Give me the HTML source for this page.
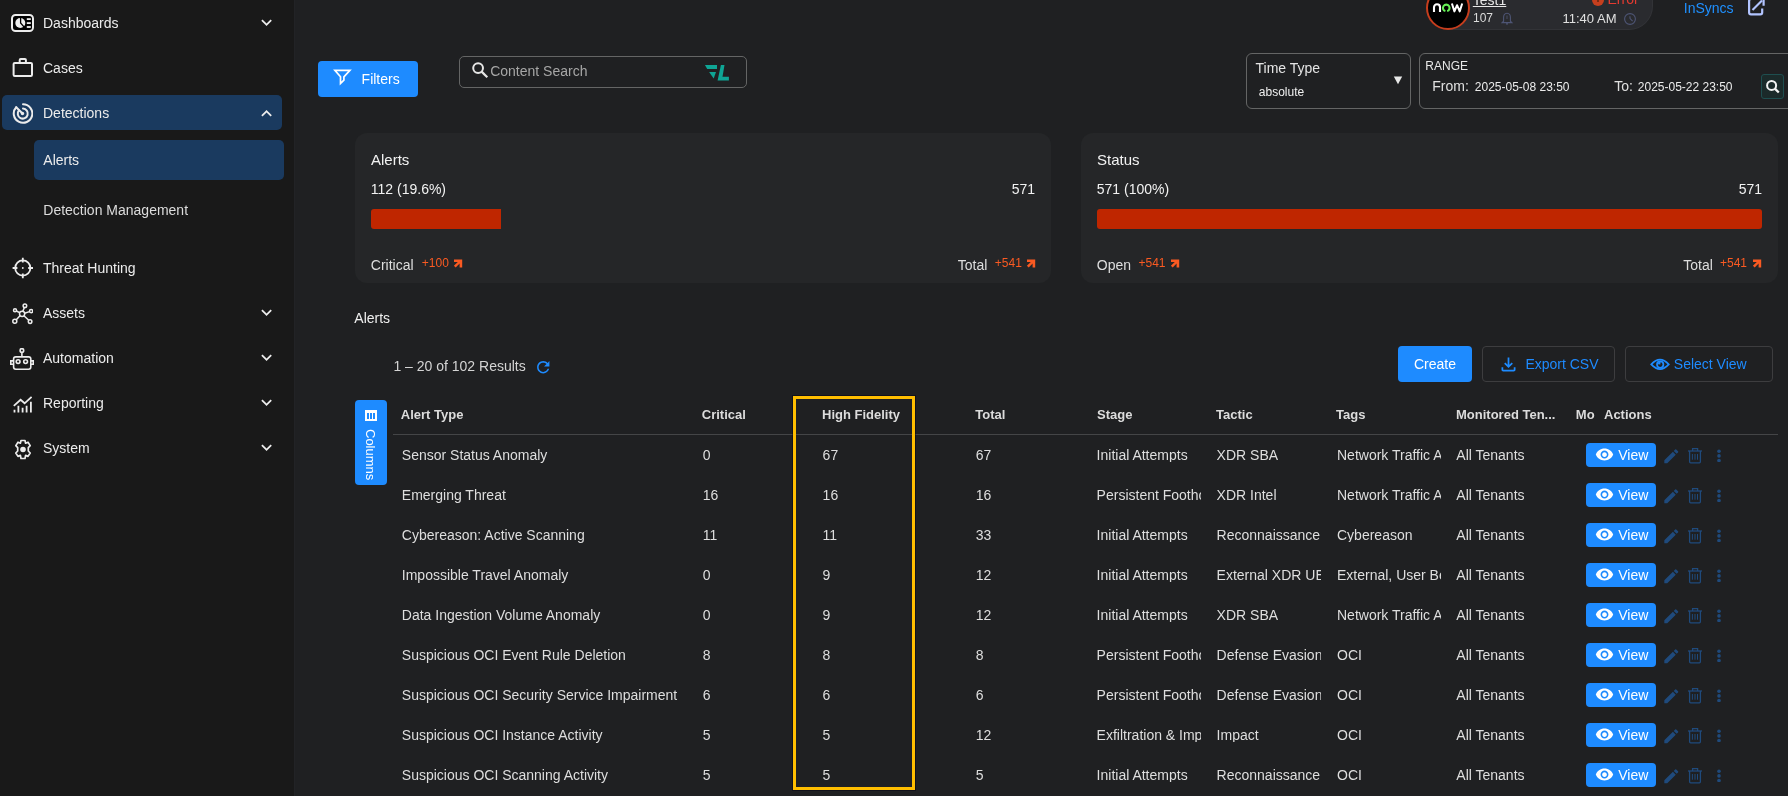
<!DOCTYPE html>
<html><head><meta charset="utf-8"><style>
html,body{margin:0;padding:0;width:1788px;height:796px;overflow:hidden;background:#1f2022;font-family:"Liberation Sans", sans-serif}
.t{position:absolute;white-space:nowrap;font-family:"Liberation Sans", sans-serif}
.r{position:absolute;display:block}
</style></head><body>
<div id="root" style="position:absolute;left:0;top:0;width:1788px;height:796px;overflow:hidden;will-change:transform">
<div class="r" style="left:0px;top:0px;width:294px;height:796px;background:#191919"></div>
<div class="r" style="left:294px;top:0px;width:1px;height:796px;background:#222326"></div>
<div class="r" style="left:2px;top:95px;width:280px;height:35px;background:#1a3a5f;border-radius:5px"></div>
<div class="r" style="left:34px;top:140px;width:250px;height:40px;background:#1a3a5f;border-radius:5px"></div>
<svg class="r" style="left:11px;top:14px;" width="23" height="18" viewBox="0 0 23 18"><rect x="1" y="1" width="21" height="16" rx="3.5" fill="#000" stroke="#ececec" stroke-width="2"/><circle cx="9.3" cy="9" r="5" fill="#ececec"/><path d="M9.6 3.6 V9 L13.6 13.6" fill="none" stroke="#000" stroke-width="1.3"/><rect x="15.8" y="4.2" width="4" height="1.8" fill="#ececec"/><rect x="15.8" y="8.2" width="4" height="1.8" fill="#ececec"/><rect x="15.8" y="12.1" width="4" height="1.8" fill="#ececec"/></svg>
<svg class="r" style="left:12px;top:57px;" width="22" height="21" viewBox="0 0 22 21"><rect x="1.6" y="5.9" width="18.4" height="13.1" rx="1.2" fill="none" stroke="#ececec" stroke-width="2"/><path d="M7.7 5.9 V3 Q7.7 2 8.7 2 H12.9 Q13.9 2 13.9 3 V5.9" fill="none" stroke="#ececec" stroke-width="2"/></svg>
<svg class="r" style="left:12px;top:102.7px;" width="21" height="21" viewBox="0 0 21 21"><path d="M11 1.2 A9.3 9.3 0 1 1 4.2 4.2" fill="none" stroke="#ececec" stroke-width="2" stroke-linecap="round"/><path d="M11 5.6 A5 5 0 1 1 6.9 7.4" fill="none" stroke="#ececec" stroke-width="2" stroke-linecap="round"/><path d="M4.2 4.2 L10.5 10.5" stroke="#ececec" stroke-width="2" stroke-linecap="round"/><circle cx="10.5" cy="10.5" r="1.7" fill="#ececec"/></svg>
<svg class="r" style="left:12px;top:257px;" width="22" height="22" viewBox="0 0 22 22"><circle cx="10.8" cy="11" r="7.6" fill="none" stroke="#ececec" stroke-width="1.8"/><path d="M10.8 0.8 V5.6 M10.8 16.4 V21.2 M0.6 11 H5.4 M16.2 11 H21" stroke="#ececec" stroke-width="1.8"/><circle cx="10.8" cy="11" r="0.9" fill="#ececec"/></svg>
<svg class="r" style="left:11px;top:303px;" width="22" height="22" viewBox="0 0 22 22"><g fill="none" stroke="#ececec" stroke-width="1.5"><circle cx="11.1" cy="10.8" r="2.6"/><circle cx="13.9" cy="2.8" r="1.8"/><circle cx="4" cy="7.3" r="1.5"/><circle cx="20.1" cy="8.1" r="1.6"/><circle cx="3.8" cy="18.2" r="2"/><circle cx="19.1" cy="18.6" r="1.8"/><path d="M11.8 8.3 L13.4 4.5 M8.6 9.7 L5.4 8 M13.6 10.2 L18.5 8.6 M9.2 12.6 L5.3 16.8 M12.9 12.7 L17.8 17.3"/></g></svg>
<svg class="r" style="left:10px;top:348px;" width="24" height="23" viewBox="0 0 24 23"><g fill="none" stroke="#ececec" stroke-width="1.6"><circle cx="11.9" cy="2.4" r="1.8"/><path d="M11.9 4.2 V8.9"/><rect x="3.6" y="8.9" width="17.2" height="12.3" rx="2.2"/><path d="M3.6 12.9 H0.8 V16.3 H3.6 M20.8 12.9 H23.3 V16.3 H20.8"/><circle cx="8.1" cy="13.6" r="1.9"/><circle cx="15.6" cy="13.6" r="1.9"/></g></svg>
<svg class="r" style="left:12px;top:395px;" width="20" height="18" viewBox="0 0 20 18"><g fill="none" stroke="#ececec" stroke-width="1.8"><path d="M1.8 10.8 L8.6 4.8 L12.6 8.3 L19.6 1.8"/><path d="M2.5 14.8 V17.5 M6.4 10.8 V17.5 M10.6 12.8 V17.5 M14.6 10.8 V17.5 M18.9 6.8 V17.5"/></g></svg>
<svg class="r" style="left:13px;top:438.5px;" width="20" height="21" viewBox="0 0 20 21"><path d="M8 1.5 H12 L12.6 4.2 L15 3.2 L17.2 6.6 L15.3 8.6 V12 L17.2 14 L15 17.4 L12.6 16.4 L12 19.5 H8 L7.4 16.4 L5 17.4 L2.8 14 L4.7 12 V8.6 L2.8 6.6 L5 3.2 L7.4 4.2 Z" fill="none" stroke="#ececec" stroke-width="1.7" stroke-linejoin="round"/><circle cx="10" cy="10.5" r="2.8" fill="#ececec"/></svg>
<svg class="r" style="left:256.02px;top:12.24px" width="21.12" height="21.12" viewBox="0 0 24 24"><path d="M16.59 8.59L12 13.17 7.41 8.59 6 10l6 6 6-6z" fill="#ececec"/></svg>
<svg class="r" style="left:256.02px;top:302.24px" width="21.12" height="21.12" viewBox="0 0 24 24"><path d="M16.59 8.59L12 13.17 7.41 8.59 6 10l6 6 6-6z" fill="#ececec"/></svg>
<svg class="r" style="left:256.02px;top:347.24px" width="21.12" height="21.12" viewBox="0 0 24 24"><path d="M16.59 8.59L12 13.17 7.41 8.59 6 10l6 6 6-6z" fill="#ececec"/></svg>
<svg class="r" style="left:256.02px;top:392.24px" width="21.12" height="21.12" viewBox="0 0 24 24"><path d="M16.59 8.59L12 13.17 7.41 8.59 6 10l6 6 6-6z" fill="#ececec"/></svg>
<svg class="r" style="left:256.02px;top:437.24px" width="21.12" height="21.12" viewBox="0 0 24 24"><path d="M16.59 8.59L12 13.17 7.41 8.59 6 10l6 6 6-6z" fill="#ececec"/></svg>
<svg class="r" style="left:256.02px;top:103.26px" width="21.12" height="21.12" viewBox="0 0 24 24"><path d="M12 8l-6 6 1.41 1.41L12 10.83l4.59 4.58L18 14z" fill="#ececec"/></svg>
<div class="t" style="left:43px;top:16.15px;font-size:14px;line-height:14px;color:#ececec;font-weight:normal;">Dashboards</div>
<div class="t" style="left:43px;top:61.15px;font-size:14px;line-height:14px;color:#ececec;font-weight:normal;">Cases</div>
<div class="t" style="left:43px;top:106.15px;font-size:14px;line-height:14px;color:#ececec;font-weight:normal;">Detections</div>
<div class="t" style="left:43px;top:261.15px;font-size:14px;line-height:14px;color:#ececec;font-weight:normal;">Threat Hunting</div>
<div class="t" style="left:43px;top:306.15px;font-size:14px;line-height:14px;color:#ececec;font-weight:normal;">Assets</div>
<div class="t" style="left:43px;top:351.15px;font-size:14px;line-height:14px;color:#ececec;font-weight:normal;">Automation</div>
<div class="t" style="left:43px;top:396.15px;font-size:14px;line-height:14px;color:#ececec;font-weight:normal;">Reporting</div>
<div class="t" style="left:43px;top:441.15px;font-size:14px;line-height:14px;color:#ececec;font-weight:normal;">System</div>
<div class="t" style="left:43.3px;top:153.15px;font-size:14px;line-height:14px;color:#ececec;font-weight:normal;">Alerts</div>
<div class="t" style="left:43.3px;top:203.15px;font-size:14px;line-height:14px;color:#dcdcdc;font-weight:normal;">Detection Management</div>
<div class="r" style="left:295px;top:0px;width:1493px;height:796px;background:#1f2022"></div>
<div class="r" style="left:1448px;top:-30px;width:205px;height:60px;background:#2a2b2f;border:1px solid #323337;border-left:0;box-sizing:border-box;border-radius:0 0 24px 0"></div>
<div class="r" style="left:1426px;top:-14.5px;width:44px;height:44px;border:2px solid #c63d1d;border-radius:50%;background:#000;box-sizing:border-box"></div>
<svg class="r" style="left:1428px;top:0px;" width="40" height="16" viewBox="0 0 40 16"><path d="M6 12.1 V7.3 A3 3 0 0 1 12 7.3 V12.1" fill="none" stroke="#fff" stroke-width="2.1"/><path d="M17.4 11.1 A3.3 3.3 0 1 1 19.1 11.1" fill="none" stroke="#66ee55" stroke-width="2.1"/><path d="M23.9 3.5 L26.4 11.4 L29.05 5.2 L31.7 11.4 L34.2 3.5" fill="none" stroke="#fff" stroke-width="2" stroke-linejoin="round"/></svg>
<div class="t" style="left:1472.8px;top:-6.85px;font-size:14px;line-height:14px;color:#e8e8e8;font-weight:normal;"><span style="text-decoration:underline">Test1</span></div>
<div class="t" style="left:1473px;top:11.84px;font-size:12px;line-height:12px;color:#dcdcdc;font-weight:normal;">107</div>
<svg class="r" style="left:1501px;top:11.5px;" width="12" height="13" viewBox="0 0 12 13"><path d="M6 1.2 C3.4 1.2 2.6 3.2 2.6 5.4 V9.2 L1.2 10.6 H10.8 L9.4 9.2 V5.4 C9.4 3.2 8.6 1.2 6 1.2 Z" fill="none" stroke="#4e5575" stroke-width="1.1"/><path d="M5 11.8 H7" stroke="#4e5575" stroke-width="1.2"/><path d="M6 3.5 V7" stroke="#4e5575" stroke-width="0.8"/></svg>
<div class="r" style="left:1592px;top:-6.2px;width:12px;height:12px;border-radius:50%;background:#c63f1e"></div>
<div class="r" style="left:1597.3px;top:-4px;width:1.400000000000091px;height:6px;background:#7a2a14"></div>
<div class="t" style="left:1607.5px;top:-7.85px;font-size:14px;line-height:14px;color:#e53a30;font-weight:normal;">Error</div>
<div class="t" style="left:1562.5px;top:12.00px;font-size:13px;line-height:13px;color:#e0e0e0;font-weight:normal;">11:40 AM</div>
<svg class="r" style="left:1624px;top:13px;" width="12" height="12" viewBox="0 0 12 12"><circle cx="6" cy="6" r="5.4" fill="none" stroke="#4e5575" stroke-width="1.1"/><path d="M5.9 3.2 L6.1 5.6 L8.6 8.2" fill="none" stroke="#4e5575" stroke-width="1.1"/></svg>
<div class="t" style="left:1683.8px;top:1.15px;font-size:14px;line-height:14px;color:#1f90ff;font-weight:normal;">InSyncs</div>
<svg class="r" style="left:1746px;top:-3px;" width="20" height="20" viewBox="0 0 20 20"><path d="M8 2 H5 Q3.1 2 3.1 3.9 V15.4 Q3.1 17.3 5 17.3 H14.3 Q16.2 17.3 16.2 15.4 V11.5" fill="none" stroke="#b2c4ff" stroke-width="2.2"/><path d="M6.5 13 L16 3.5" fill="none" stroke="#b2c4ff" stroke-width="2.1"/><path d="M10.5 1.8 H17.6 V8.8" fill="none" stroke="#b2c4ff" stroke-width="2.2"/></svg>
<div class="r" style="left:318px;top:61px;width:100px;height:36px;background:#1e8bff;border-radius:4px"></div>
<svg class="r" style="left:333px;top:69px;" width="19" height="17" viewBox="0 0 19 17"><path d="M1.9 1.4 H16.9 L10.9 7.8 V11.2 L7.5 14.5 V7.8 Z" fill="none" stroke="#fff" stroke-width="1.7" stroke-linejoin="miter"/></svg>
<div class="t" style="left:361.6px;top:72.15px;font-size:14px;line-height:14px;color:#fff;font-weight:normal;">Filters</div>
<div class="r" style="left:459px;top:56px;width:288px;height:32px;border:1px solid #646565;border-radius:5px;box-sizing:border-box"></div>
<svg class="r" style="left:471px;top:61px;" width="18" height="18" viewBox="0 0 18 18"><circle cx="7.1" cy="7.1" r="4.9" fill="none" stroke="#e6e6e6" stroke-width="2"/><path d="M10.6 10.6 L16.3 16.3" stroke="#e6e6e6" stroke-width="2.2"/></svg>
<div class="t" style="left:490.2px;top:64.35px;font-size:14px;line-height:14px;color:#a6a6a6;font-weight:normal;">Content Search</div>
<svg class="r" style="left:704px;top:64px;" width="26" height="18" viewBox="0 0 26 18"><path d="M0.9 0.9 H13 V5 H3.2 Z" fill="#0fa595"/><path d="M5.1 8.1 H12 L9.7 14.6 Z" fill="#0fa595"/><path d="M16.9 1 H20.5 L18.5 12.7 H24.9 V16.6 H13.6 Z" fill="#0fa595"/></svg>
<div class="r" style="left:1246px;top:53px;width:165px;height:56px;border:1px solid #646565;border-radius:6px;box-sizing:border-box"></div>
<div class="t" style="left:1255.5px;top:61.35px;font-size:14px;line-height:14px;color:#e4e4e4;font-weight:normal;">Time Type</div>
<div class="t" style="left:1258.8px;top:85.84px;font-size:12px;line-height:12px;color:#f0f0f0;font-weight:normal;">absolute</div>
<svg class="r" style="left:1393px;top:76px;" width="10" height="9" viewBox="0 0 10 9"><path d="M0.8 0.5 H9.2 L5 8.2 Z" fill="#e8e8e8"/></svg>
<div class="r" style="left:1419px;top:53px;width:381px;height:56px;border:1px solid #646565;border-radius:6px;box-sizing:border-box"></div>
<div class="t" style="left:1425.3px;top:59.54px;font-size:12px;line-height:12px;color:#e8e8e8;font-weight:normal;">RANGE</div>
<div class="t" style="left:1432.3px;top:79.35px;font-size:14px;line-height:14px;color:#e0e0e0;font-weight:normal;">From:</div>
<div class="t" style="left:1474.8px;top:81.04px;font-size:12px;line-height:12px;color:#ececec;font-weight:normal;">2025-05-08 23:50</div>
<div class="t" style="left:1614.2px;top:79.35px;font-size:14px;line-height:14px;color:#e0e0e0;font-weight:normal;">To:</div>
<div class="t" style="left:1637.8px;top:81.04px;font-size:12px;line-height:12px;color:#ececec;font-weight:normal;">2025-05-22 23:50</div>
<div class="r" style="left:1761px;top:74px;width:23px;height:25px;background:#1b2a2a;border:1px solid #1e4e4f;border-radius:3px;box-sizing:border-box"></div>
<svg class="r" style="left:1761px;top:74px;" width="23" height="25" viewBox="0 0 23 25"><circle cx="10.6" cy="11.4" r="4.5" fill="none" stroke="#f2f2f2" stroke-width="2"/><path d="M13.8 14.6 L17.8 18.5" stroke="#f2f2f2" stroke-width="2.3"/></svg>
<div class="r" style="left:355px;top:133px;width:696px;height:150px;background:#252628;border-radius:12px"></div>
<div class="t" style="left:371px;top:152.30px;font-size:15px;line-height:15px;color:#f2f2f2;font-weight:normal;">Alerts</div>
<div class="t" style="left:370.8px;top:182.15px;font-size:14px;line-height:14px;color:#f2f2f2;font-weight:normal;">112 (19.6%)</div>
<div class="t" style="left:835px;width:200px;text-align:right;top:182.15px;font-size:14px;line-height:14px;color:#f2f2f2">571</div>
<div class="r" style="left:371px;top:209px;width:130px;height:20px;background:#bf2600;border-radius:3px;border-top-right-radius:0;border-bottom-right-radius:0"></div>
<div class="t" style="left:370.8px;top:258.15px;font-size:14px;line-height:14px;color:#dedede;font-weight:normal;">Critical</div>
<div class="t" style="left:421.8px;top:257.34px;font-size:12px;line-height:12px;color:#fa5a22;font-weight:normal;">+100</div>
<svg class="r" style="left:453.2px;top:258.5px;" width="10" height="10" viewBox="0 0 10 10"><path d="M1 0.5 H9.2 V8.4 H6.6 V4.6 L2.7 8.5 L0.9 6.7 L4.8 2.9 H1 Z" fill="#fa5a22"/></svg>
<div class="t" style="left:957.8px;top:258.15px;font-size:14px;line-height:14px;color:#dedede;font-weight:normal;">Total</div>
<div class="t" style="left:994.8px;top:257.34px;font-size:12px;line-height:12px;color:#fa5a22;font-weight:normal;">+541</div>
<svg class="r" style="left:1026px;top:258.5px;" width="10" height="10" viewBox="0 0 10 10"><path d="M1 0.5 H9.2 V8.4 H6.6 V4.6 L2.7 8.5 L0.9 6.7 L4.8 2.9 H1 Z" fill="#fa5a22"/></svg>
<div class="r" style="left:1081px;top:133px;width:697px;height:150px;background:#252628;border-radius:12px"></div>
<div class="t" style="left:1097px;top:152.30px;font-size:15px;line-height:15px;color:#f2f2f2;font-weight:normal;">Status</div>
<div class="t" style="left:1096.8px;top:182.15px;font-size:14px;line-height:14px;color:#f2f2f2;font-weight:normal;">571 (100%)</div>
<div class="t" style="left:1562px;width:200px;text-align:right;top:182.15px;font-size:14px;line-height:14px;color:#f2f2f2">571</div>
<div class="r" style="left:1097px;top:209px;width:665px;height:20px;background:#bf2600;border-radius:3px"></div>
<div class="t" style="left:1096.8px;top:258.15px;font-size:14px;line-height:14px;color:#dedede;font-weight:normal;">Open</div>
<div class="t" style="left:1138.5px;top:257.34px;font-size:12px;line-height:12px;color:#fa5a22;font-weight:normal;">+541</div>
<svg class="r" style="left:1170px;top:258.5px;" width="10" height="10" viewBox="0 0 10 10"><path d="M1 0.5 H9.2 V8.4 H6.6 V4.6 L2.7 8.5 L0.9 6.7 L4.8 2.9 H1 Z" fill="#fa5a22"/></svg>
<div class="t" style="left:1683.3px;top:258.15px;font-size:14px;line-height:14px;color:#dedede;font-weight:normal;">Total</div>
<div class="t" style="left:1720px;top:257.34px;font-size:12px;line-height:12px;color:#fa5a22;font-weight:normal;">+541</div>
<svg class="r" style="left:1751.5px;top:258.5px;" width="10" height="10" viewBox="0 0 10 10"><path d="M1 0.5 H9.2 V8.4 H6.6 V4.6 L2.7 8.5 L0.9 6.7 L4.8 2.9 H1 Z" fill="#fa5a22"/></svg>
<div class="t" style="left:354.3px;top:311.15px;font-size:14px;line-height:14px;color:#f0f0f0;font-weight:normal;">Alerts</div>
<div class="t" style="left:393.4px;top:359.15px;font-size:14px;line-height:14px;color:#d4d4d4;font-weight:normal;">1 – 20 of 102 Results</div>
<svg class="r" style="left:534px;top:358px;" width="18.5" height="18.5" viewBox="0 0 24 24"><path d="M17.65 6.35C16.2 4.9 14.21 4 12 4c-4.42 0-7.99 3.58-7.99 8s3.57 8 7.99 8c3.73 0 6.84-2.55 7.73-6h-2.08c-.82 2.33-3.04 4-5.65 4-3.31 0-6-2.69-6-6s2.69-6 6-6c1.66 0 3.14.69 4.22 1.78L13 11h7V4l-2.35 2.35z" fill="#1e8bff"/></svg>
<div class="r" style="left:1398px;top:346px;width:74px;height:36px;background:#1e8bff;border-radius:4px"></div>
<div class="t" style="left:1414px;top:357.15px;font-size:14px;line-height:14px;color:#fff;font-weight:normal;">Create</div>
<div class="r" style="left:1482px;top:346px;width:133px;height:36px;border:1px solid #3d3d3f;border-radius:4px;box-sizing:border-box"></div>
<svg class="r" style="left:1497.5px;top:354.2px;" width="21" height="21" viewBox="0 0 24 24"><path d="M18 15v3H6v-3H4v3c0 1.1.9 2 2 2h12c1.1 0 2-.9 2-2v-3h-2zm-1-4l-1.41-1.41L13 12.17V4h-2v8.17L8.41 9.59 7 11l5 5 5-5z" fill="#1e8bff"/></svg>
<div class="t" style="left:1525.4px;top:357.15px;font-size:14px;line-height:14px;color:#1e8bff;font-weight:normal;">Export CSV</div>
<div class="r" style="left:1625px;top:346px;width:148px;height:36px;border:1px solid #3d3d3f;border-radius:4px;box-sizing:border-box"></div>
<svg class="r" style="left:1650px;top:357px;" width="20" height="16" viewBox="0 0 20 16"><path d="M1.3 7.4 Q10 -2 18.7 7.4 Q10 16.8 1.3 7.4 Z" fill="none" stroke="#1e8bff" stroke-width="1.8"/><circle cx="10.2" cy="7.6" r="3.2" fill="none" stroke="#1e8bff" stroke-width="1.7"/><path d="M7.6 7.2 A2.8 2.8 0 0 1 10.6 4.8 L10.3 7.5 Z" fill="#1e8bff"/></svg>
<div class="t" style="left:1673.8px;top:357.15px;font-size:14px;line-height:14px;color:#1e8bff;font-weight:normal;">Select View</div>
<div class="r" style="left:355px;top:400px;width:32px;height:85px;background:#1e8bff;border-radius:4px"></div>
<div class="r" style="left:365px;top:410px;width:12px;height:11px;background:#fff"></div>
<div class="r" style="left:367px;top:413px;width:1.6000000000000227px;height:6px;background:#1e8bff"></div>
<div class="r" style="left:370.1px;top:413px;width:1.7999999999999545px;height:6px;background:#1e8bff"></div>
<div class="r" style="left:373.4px;top:413px;width:1.6000000000000227px;height:6px;background:#1e8bff"></div>
<div class="t" style="left:377px;top:429px;font-size:13px;line-height:13px;color:#fff;transform-origin:0 0;transform:rotate(90deg)">Columns</div>
<div class="t" style="left:400.8px;top:408.00px;font-size:13px;line-height:13px;color:#dcdcdc;font-weight:bold;">Alert Type</div>
<div class="t" style="left:701.8px;top:408.00px;font-size:13px;line-height:13px;color:#dcdcdc;font-weight:bold;">Critical</div>
<div class="t" style="left:822px;top:408.00px;font-size:13px;line-height:13px;color:#dcdcdc;font-weight:bold;">High Fidelity</div>
<div class="t" style="left:975.3px;top:408.00px;font-size:13px;line-height:13px;color:#dcdcdc;font-weight:bold;">Total</div>
<div class="t" style="left:1097px;top:408.00px;font-size:13px;line-height:13px;color:#dcdcdc;font-weight:bold;">Stage</div>
<div class="t" style="left:1216px;top:408.00px;font-size:13px;line-height:13px;color:#dcdcdc;font-weight:bold;">Tactic</div>
<div class="t" style="left:1336px;top:408.00px;font-size:13px;line-height:13px;color:#dcdcdc;font-weight:bold;">Tags</div>
<div class="t" style="left:1456px;top:408.00px;font-size:13px;line-height:13px;color:#dcdcdc;font-weight:bold;">Monitored Ten...</div>
<div class="t" style="left:1575.8px;top:408.00px;font-size:13px;line-height:13px;color:#dcdcdc;font-weight:bold;">Mo</div>
<div class="t" style="left:1604px;top:408.00px;font-size:13px;line-height:13px;color:#dcdcdc;font-weight:bold;">Actions</div>
<div class="r" style="left:393px;top:434px;width:1385px;height:1px;background:#444547"></div>
<div class="t" style="left:401.8px;top:447.95px;font-size:14px;line-height:14px;color:#dedede;font-weight:normal;">Sensor Status Anomaly</div>
<div class="t" style="left:702.8px;top:447.95px;font-size:14px;line-height:14px;color:#dedede;font-weight:normal;">0</div>
<div class="t" style="left:822.6px;top:447.95px;font-size:14px;line-height:14px;color:#dedede;font-weight:normal;">67</div>
<div class="t" style="left:975.8px;top:447.95px;font-size:14px;line-height:14px;color:#dedede;font-weight:normal;">67</div>
<div class="t" style="left:1096.6px;top:447.95px;font-size:14px;line-height:14px;color:#dedede;font-weight:normal;width:104.3px;overflow:hidden;white-space:nowrap">Initial Attempts</div>
<div class="t" style="left:1216.6px;top:447.95px;font-size:14px;line-height:14px;color:#dedede;font-weight:normal;width:104.3px;overflow:hidden;white-space:nowrap">XDR SBA</div>
<div class="t" style="left:1337px;top:447.95px;font-size:14px;line-height:14px;color:#dedede;font-weight:normal;width:104.3px;overflow:hidden;white-space:nowrap">Network Traffic Analysis</div>
<div class="t" style="left:1456.3px;top:447.95px;font-size:14px;line-height:14px;color:#dedede;font-weight:normal;">All Tenants</div>
<div class="r" style="left:1586px;top:443px;width:70px;height:24px;background:#1e8bff;border-radius:4px"></div>
<svg class="r" style="left:1594.5px;top:445.4px;" width="19" height="19" viewBox="0 0 24 24"><path d="M12 4.5C7 4.5 2.73 7.61 1 12c1.73 4.39 6 7.5 11 7.5s9.27-3.11 11-7.5c-1.73-4.39-6-7.5-11-7.5zM12 17c-2.76 0-5-2.24-5-5s2.24-5 5-5 5 2.24 5 5-2.24 5-5 5zm0-8c-1.66 0-3 1.34-3 3s1.34 3 3 3 3-1.34 3-3-1.34-3-3-3z" fill="#fff"/></svg>
<div class="t" style="left:1618.2px;top:447.95px;font-size:14px;line-height:14px;color:#fff;font-weight:normal;">View</div>
<svg class="r" style="left:1661.6px;top:446.7px;" width="18.6" height="18.6" viewBox="0 0 24 24"><path d="M3 17.25V21h3.75L17.81 9.94l-3.75-3.75L3 17.25zM20.71 7.04c.39-.39.39-1.02 0-1.41l-2.34-2.34a.9959.9959 0 0 0-1.41 0l-1.83 1.83 3.75 3.75 1.83-1.83z" fill="#1f4a7c"/></svg>
<svg class="r" style="left:1687px;top:447px;" width="16" height="17" viewBox="0 0 16 17"><g fill="none" stroke="#1f4a7c" stroke-width="1.3"><path d="M1 4 H15"/><path d="M5.6 4 V1.6 H10.6 V4"/><path d="M2.6 4 V14.8 Q2.6 15.8 3.6 15.8 H12.4 Q13.4 15.8 13.4 14.8 V4"/></g><path d="M5.4 7 V12.7 M8 7 V12.7 M10.5 7 V12.7" stroke="#1f4a7c" stroke-width="1"/></svg>
<svg class="r" style="left:1716px;top:449px;" width="6" height="13" viewBox="0 0 6 13"><circle cx="3" cy="2.2" r="1.8" fill="#1f4a7c"/><circle cx="3" cy="6.9" r="1.8" fill="#1f4a7c"/><circle cx="3" cy="11.5" r="1.8" fill="#1f4a7c"/></svg>
<div class="t" style="left:401.8px;top:487.95px;font-size:14px;line-height:14px;color:#dedede;font-weight:normal;">Emerging Threat</div>
<div class="t" style="left:702.8px;top:487.95px;font-size:14px;line-height:14px;color:#dedede;font-weight:normal;">16</div>
<div class="t" style="left:822.6px;top:487.95px;font-size:14px;line-height:14px;color:#dedede;font-weight:normal;">16</div>
<div class="t" style="left:975.8px;top:487.95px;font-size:14px;line-height:14px;color:#dedede;font-weight:normal;">16</div>
<div class="t" style="left:1096.6px;top:487.95px;font-size:14px;line-height:14px;color:#dedede;font-weight:normal;width:104.3px;overflow:hidden;white-space:nowrap">Persistent Foothold</div>
<div class="t" style="left:1216.6px;top:487.95px;font-size:14px;line-height:14px;color:#dedede;font-weight:normal;width:104.3px;overflow:hidden;white-space:nowrap">XDR Intel</div>
<div class="t" style="left:1337px;top:487.95px;font-size:14px;line-height:14px;color:#dedede;font-weight:normal;width:104.3px;overflow:hidden;white-space:nowrap">Network Traffic Analysis</div>
<div class="t" style="left:1456.3px;top:487.95px;font-size:14px;line-height:14px;color:#dedede;font-weight:normal;">All Tenants</div>
<div class="r" style="left:1586px;top:483px;width:70px;height:24px;background:#1e8bff;border-radius:4px"></div>
<svg class="r" style="left:1594.5px;top:485.4px;" width="19" height="19" viewBox="0 0 24 24"><path d="M12 4.5C7 4.5 2.73 7.61 1 12c1.73 4.39 6 7.5 11 7.5s9.27-3.11 11-7.5c-1.73-4.39-6-7.5-11-7.5zM12 17c-2.76 0-5-2.24-5-5s2.24-5 5-5 5 2.24 5 5-2.24 5-5 5zm0-8c-1.66 0-3 1.34-3 3s1.34 3 3 3 3-1.34 3-3-1.34-3-3-3z" fill="#fff"/></svg>
<div class="t" style="left:1618.2px;top:487.95px;font-size:14px;line-height:14px;color:#fff;font-weight:normal;">View</div>
<svg class="r" style="left:1661.6px;top:486.7px;" width="18.6" height="18.6" viewBox="0 0 24 24"><path d="M3 17.25V21h3.75L17.81 9.94l-3.75-3.75L3 17.25zM20.71 7.04c.39-.39.39-1.02 0-1.41l-2.34-2.34a.9959.9959 0 0 0-1.41 0l-1.83 1.83 3.75 3.75 1.83-1.83z" fill="#1f4a7c"/></svg>
<svg class="r" style="left:1687px;top:487px;" width="16" height="17" viewBox="0 0 16 17"><g fill="none" stroke="#1f4a7c" stroke-width="1.3"><path d="M1 4 H15"/><path d="M5.6 4 V1.6 H10.6 V4"/><path d="M2.6 4 V14.8 Q2.6 15.8 3.6 15.8 H12.4 Q13.4 15.8 13.4 14.8 V4"/></g><path d="M5.4 7 V12.7 M8 7 V12.7 M10.5 7 V12.7" stroke="#1f4a7c" stroke-width="1"/></svg>
<svg class="r" style="left:1716px;top:489px;" width="6" height="13" viewBox="0 0 6 13"><circle cx="3" cy="2.2" r="1.8" fill="#1f4a7c"/><circle cx="3" cy="6.9" r="1.8" fill="#1f4a7c"/><circle cx="3" cy="11.5" r="1.8" fill="#1f4a7c"/></svg>
<div class="t" style="left:401.8px;top:527.95px;font-size:14px;line-height:14px;color:#dedede;font-weight:normal;">Cybereason: Active Scanning</div>
<div class="t" style="left:702.8px;top:527.95px;font-size:14px;line-height:14px;color:#dedede;font-weight:normal;">11</div>
<div class="t" style="left:822.6px;top:527.95px;font-size:14px;line-height:14px;color:#dedede;font-weight:normal;">11</div>
<div class="t" style="left:975.8px;top:527.95px;font-size:14px;line-height:14px;color:#dedede;font-weight:normal;">33</div>
<div class="t" style="left:1096.6px;top:527.95px;font-size:14px;line-height:14px;color:#dedede;font-weight:normal;width:104.3px;overflow:hidden;white-space:nowrap">Initial Attempts</div>
<div class="t" style="left:1216.6px;top:527.95px;font-size:14px;line-height:14px;color:#dedede;font-weight:normal;width:104.3px;overflow:hidden;white-space:nowrap">Reconnaissance</div>
<div class="t" style="left:1337px;top:527.95px;font-size:14px;line-height:14px;color:#dedede;font-weight:normal;width:104.3px;overflow:hidden;white-space:nowrap">Cybereason</div>
<div class="t" style="left:1456.3px;top:527.95px;font-size:14px;line-height:14px;color:#dedede;font-weight:normal;">All Tenants</div>
<div class="r" style="left:1586px;top:523px;width:70px;height:24px;background:#1e8bff;border-radius:4px"></div>
<svg class="r" style="left:1594.5px;top:525.4px;" width="19" height="19" viewBox="0 0 24 24"><path d="M12 4.5C7 4.5 2.73 7.61 1 12c1.73 4.39 6 7.5 11 7.5s9.27-3.11 11-7.5c-1.73-4.39-6-7.5-11-7.5zM12 17c-2.76 0-5-2.24-5-5s2.24-5 5-5 5 2.24 5 5-2.24 5-5 5zm0-8c-1.66 0-3 1.34-3 3s1.34 3 3 3 3-1.34 3-3-1.34-3-3-3z" fill="#fff"/></svg>
<div class="t" style="left:1618.2px;top:527.95px;font-size:14px;line-height:14px;color:#fff;font-weight:normal;">View</div>
<svg class="r" style="left:1661.6px;top:526.7px;" width="18.6" height="18.6" viewBox="0 0 24 24"><path d="M3 17.25V21h3.75L17.81 9.94l-3.75-3.75L3 17.25zM20.71 7.04c.39-.39.39-1.02 0-1.41l-2.34-2.34a.9959.9959 0 0 0-1.41 0l-1.83 1.83 3.75 3.75 1.83-1.83z" fill="#1f4a7c"/></svg>
<svg class="r" style="left:1687px;top:527px;" width="16" height="17" viewBox="0 0 16 17"><g fill="none" stroke="#1f4a7c" stroke-width="1.3"><path d="M1 4 H15"/><path d="M5.6 4 V1.6 H10.6 V4"/><path d="M2.6 4 V14.8 Q2.6 15.8 3.6 15.8 H12.4 Q13.4 15.8 13.4 14.8 V4"/></g><path d="M5.4 7 V12.7 M8 7 V12.7 M10.5 7 V12.7" stroke="#1f4a7c" stroke-width="1"/></svg>
<svg class="r" style="left:1716px;top:529px;" width="6" height="13" viewBox="0 0 6 13"><circle cx="3" cy="2.2" r="1.8" fill="#1f4a7c"/><circle cx="3" cy="6.9" r="1.8" fill="#1f4a7c"/><circle cx="3" cy="11.5" r="1.8" fill="#1f4a7c"/></svg>
<div class="t" style="left:401.8px;top:567.95px;font-size:14px;line-height:14px;color:#dedede;font-weight:normal;">Impossible Travel Anomaly</div>
<div class="t" style="left:702.8px;top:567.95px;font-size:14px;line-height:14px;color:#dedede;font-weight:normal;">0</div>
<div class="t" style="left:822.6px;top:567.95px;font-size:14px;line-height:14px;color:#dedede;font-weight:normal;">9</div>
<div class="t" style="left:975.8px;top:567.95px;font-size:14px;line-height:14px;color:#dedede;font-weight:normal;">12</div>
<div class="t" style="left:1096.6px;top:567.95px;font-size:14px;line-height:14px;color:#dedede;font-weight:normal;width:104.3px;overflow:hidden;white-space:nowrap">Initial Attempts</div>
<div class="t" style="left:1216.6px;top:567.95px;font-size:14px;line-height:14px;color:#dedede;font-weight:normal;width:104.3px;overflow:hidden;white-space:nowrap">External XDR UEBA</div>
<div class="t" style="left:1337px;top:567.95px;font-size:14px;line-height:14px;color:#dedede;font-weight:normal;width:104.3px;overflow:hidden;white-space:nowrap">External, User Behavior</div>
<div class="t" style="left:1456.3px;top:567.95px;font-size:14px;line-height:14px;color:#dedede;font-weight:normal;">All Tenants</div>
<div class="r" style="left:1586px;top:563px;width:70px;height:24px;background:#1e8bff;border-radius:4px"></div>
<svg class="r" style="left:1594.5px;top:565.4px;" width="19" height="19" viewBox="0 0 24 24"><path d="M12 4.5C7 4.5 2.73 7.61 1 12c1.73 4.39 6 7.5 11 7.5s9.27-3.11 11-7.5c-1.73-4.39-6-7.5-11-7.5zM12 17c-2.76 0-5-2.24-5-5s2.24-5 5-5 5 2.24 5 5-2.24 5-5 5zm0-8c-1.66 0-3 1.34-3 3s1.34 3 3 3 3-1.34 3-3-1.34-3-3-3z" fill="#fff"/></svg>
<div class="t" style="left:1618.2px;top:567.95px;font-size:14px;line-height:14px;color:#fff;font-weight:normal;">View</div>
<svg class="r" style="left:1661.6px;top:566.7px;" width="18.6" height="18.6" viewBox="0 0 24 24"><path d="M3 17.25V21h3.75L17.81 9.94l-3.75-3.75L3 17.25zM20.71 7.04c.39-.39.39-1.02 0-1.41l-2.34-2.34a.9959.9959 0 0 0-1.41 0l-1.83 1.83 3.75 3.75 1.83-1.83z" fill="#1f4a7c"/></svg>
<svg class="r" style="left:1687px;top:567px;" width="16" height="17" viewBox="0 0 16 17"><g fill="none" stroke="#1f4a7c" stroke-width="1.3"><path d="M1 4 H15"/><path d="M5.6 4 V1.6 H10.6 V4"/><path d="M2.6 4 V14.8 Q2.6 15.8 3.6 15.8 H12.4 Q13.4 15.8 13.4 14.8 V4"/></g><path d="M5.4 7 V12.7 M8 7 V12.7 M10.5 7 V12.7" stroke="#1f4a7c" stroke-width="1"/></svg>
<svg class="r" style="left:1716px;top:569px;" width="6" height="13" viewBox="0 0 6 13"><circle cx="3" cy="2.2" r="1.8" fill="#1f4a7c"/><circle cx="3" cy="6.9" r="1.8" fill="#1f4a7c"/><circle cx="3" cy="11.5" r="1.8" fill="#1f4a7c"/></svg>
<div class="t" style="left:401.8px;top:607.95px;font-size:14px;line-height:14px;color:#dedede;font-weight:normal;">Data Ingestion Volume Anomaly</div>
<div class="t" style="left:702.8px;top:607.95px;font-size:14px;line-height:14px;color:#dedede;font-weight:normal;">0</div>
<div class="t" style="left:822.6px;top:607.95px;font-size:14px;line-height:14px;color:#dedede;font-weight:normal;">9</div>
<div class="t" style="left:975.8px;top:607.95px;font-size:14px;line-height:14px;color:#dedede;font-weight:normal;">12</div>
<div class="t" style="left:1096.6px;top:607.95px;font-size:14px;line-height:14px;color:#dedede;font-weight:normal;width:104.3px;overflow:hidden;white-space:nowrap">Initial Attempts</div>
<div class="t" style="left:1216.6px;top:607.95px;font-size:14px;line-height:14px;color:#dedede;font-weight:normal;width:104.3px;overflow:hidden;white-space:nowrap">XDR SBA</div>
<div class="t" style="left:1337px;top:607.95px;font-size:14px;line-height:14px;color:#dedede;font-weight:normal;width:104.3px;overflow:hidden;white-space:nowrap">Network Traffic Analysis</div>
<div class="t" style="left:1456.3px;top:607.95px;font-size:14px;line-height:14px;color:#dedede;font-weight:normal;">All Tenants</div>
<div class="r" style="left:1586px;top:603px;width:70px;height:24px;background:#1e8bff;border-radius:4px"></div>
<svg class="r" style="left:1594.5px;top:605.4px;" width="19" height="19" viewBox="0 0 24 24"><path d="M12 4.5C7 4.5 2.73 7.61 1 12c1.73 4.39 6 7.5 11 7.5s9.27-3.11 11-7.5c-1.73-4.39-6-7.5-11-7.5zM12 17c-2.76 0-5-2.24-5-5s2.24-5 5-5 5 2.24 5 5-2.24 5-5 5zm0-8c-1.66 0-3 1.34-3 3s1.34 3 3 3 3-1.34 3-3-1.34-3-3-3z" fill="#fff"/></svg>
<div class="t" style="left:1618.2px;top:607.95px;font-size:14px;line-height:14px;color:#fff;font-weight:normal;">View</div>
<svg class="r" style="left:1661.6px;top:606.7px;" width="18.6" height="18.6" viewBox="0 0 24 24"><path d="M3 17.25V21h3.75L17.81 9.94l-3.75-3.75L3 17.25zM20.71 7.04c.39-.39.39-1.02 0-1.41l-2.34-2.34a.9959.9959 0 0 0-1.41 0l-1.83 1.83 3.75 3.75 1.83-1.83z" fill="#1f4a7c"/></svg>
<svg class="r" style="left:1687px;top:607px;" width="16" height="17" viewBox="0 0 16 17"><g fill="none" stroke="#1f4a7c" stroke-width="1.3"><path d="M1 4 H15"/><path d="M5.6 4 V1.6 H10.6 V4"/><path d="M2.6 4 V14.8 Q2.6 15.8 3.6 15.8 H12.4 Q13.4 15.8 13.4 14.8 V4"/></g><path d="M5.4 7 V12.7 M8 7 V12.7 M10.5 7 V12.7" stroke="#1f4a7c" stroke-width="1"/></svg>
<svg class="r" style="left:1716px;top:609px;" width="6" height="13" viewBox="0 0 6 13"><circle cx="3" cy="2.2" r="1.8" fill="#1f4a7c"/><circle cx="3" cy="6.9" r="1.8" fill="#1f4a7c"/><circle cx="3" cy="11.5" r="1.8" fill="#1f4a7c"/></svg>
<div class="t" style="left:401.8px;top:647.95px;font-size:14px;line-height:14px;color:#dedede;font-weight:normal;">Suspicious OCI Event Rule Deletion</div>
<div class="t" style="left:702.8px;top:647.95px;font-size:14px;line-height:14px;color:#dedede;font-weight:normal;">8</div>
<div class="t" style="left:822.6px;top:647.95px;font-size:14px;line-height:14px;color:#dedede;font-weight:normal;">8</div>
<div class="t" style="left:975.8px;top:647.95px;font-size:14px;line-height:14px;color:#dedede;font-weight:normal;">8</div>
<div class="t" style="left:1096.6px;top:647.95px;font-size:14px;line-height:14px;color:#dedede;font-weight:normal;width:104.3px;overflow:hidden;white-space:nowrap">Persistent Foothold</div>
<div class="t" style="left:1216.6px;top:647.95px;font-size:14px;line-height:14px;color:#dedede;font-weight:normal;width:104.3px;overflow:hidden;white-space:nowrap">Defense Evasion</div>
<div class="t" style="left:1337px;top:647.95px;font-size:14px;line-height:14px;color:#dedede;font-weight:normal;width:104.3px;overflow:hidden;white-space:nowrap">OCI</div>
<div class="t" style="left:1456.3px;top:647.95px;font-size:14px;line-height:14px;color:#dedede;font-weight:normal;">All Tenants</div>
<div class="r" style="left:1586px;top:643px;width:70px;height:24px;background:#1e8bff;border-radius:4px"></div>
<svg class="r" style="left:1594.5px;top:645.4px;" width="19" height="19" viewBox="0 0 24 24"><path d="M12 4.5C7 4.5 2.73 7.61 1 12c1.73 4.39 6 7.5 11 7.5s9.27-3.11 11-7.5c-1.73-4.39-6-7.5-11-7.5zM12 17c-2.76 0-5-2.24-5-5s2.24-5 5-5 5 2.24 5 5-2.24 5-5 5zm0-8c-1.66 0-3 1.34-3 3s1.34 3 3 3 3-1.34 3-3-1.34-3-3-3z" fill="#fff"/></svg>
<div class="t" style="left:1618.2px;top:647.95px;font-size:14px;line-height:14px;color:#fff;font-weight:normal;">View</div>
<svg class="r" style="left:1661.6px;top:646.7px;" width="18.6" height="18.6" viewBox="0 0 24 24"><path d="M3 17.25V21h3.75L17.81 9.94l-3.75-3.75L3 17.25zM20.71 7.04c.39-.39.39-1.02 0-1.41l-2.34-2.34a.9959.9959 0 0 0-1.41 0l-1.83 1.83 3.75 3.75 1.83-1.83z" fill="#1f4a7c"/></svg>
<svg class="r" style="left:1687px;top:647px;" width="16" height="17" viewBox="0 0 16 17"><g fill="none" stroke="#1f4a7c" stroke-width="1.3"><path d="M1 4 H15"/><path d="M5.6 4 V1.6 H10.6 V4"/><path d="M2.6 4 V14.8 Q2.6 15.8 3.6 15.8 H12.4 Q13.4 15.8 13.4 14.8 V4"/></g><path d="M5.4 7 V12.7 M8 7 V12.7 M10.5 7 V12.7" stroke="#1f4a7c" stroke-width="1"/></svg>
<svg class="r" style="left:1716px;top:649px;" width="6" height="13" viewBox="0 0 6 13"><circle cx="3" cy="2.2" r="1.8" fill="#1f4a7c"/><circle cx="3" cy="6.9" r="1.8" fill="#1f4a7c"/><circle cx="3" cy="11.5" r="1.8" fill="#1f4a7c"/></svg>
<div class="t" style="left:401.8px;top:687.95px;font-size:14px;line-height:14px;color:#dedede;font-weight:normal;">Suspicious OCI Security Service Impairment</div>
<div class="t" style="left:702.8px;top:687.95px;font-size:14px;line-height:14px;color:#dedede;font-weight:normal;">6</div>
<div class="t" style="left:822.6px;top:687.95px;font-size:14px;line-height:14px;color:#dedede;font-weight:normal;">6</div>
<div class="t" style="left:975.8px;top:687.95px;font-size:14px;line-height:14px;color:#dedede;font-weight:normal;">6</div>
<div class="t" style="left:1096.6px;top:687.95px;font-size:14px;line-height:14px;color:#dedede;font-weight:normal;width:104.3px;overflow:hidden;white-space:nowrap">Persistent Foothold</div>
<div class="t" style="left:1216.6px;top:687.95px;font-size:14px;line-height:14px;color:#dedede;font-weight:normal;width:104.3px;overflow:hidden;white-space:nowrap">Defense Evasion</div>
<div class="t" style="left:1337px;top:687.95px;font-size:14px;line-height:14px;color:#dedede;font-weight:normal;width:104.3px;overflow:hidden;white-space:nowrap">OCI</div>
<div class="t" style="left:1456.3px;top:687.95px;font-size:14px;line-height:14px;color:#dedede;font-weight:normal;">All Tenants</div>
<div class="r" style="left:1586px;top:683px;width:70px;height:24px;background:#1e8bff;border-radius:4px"></div>
<svg class="r" style="left:1594.5px;top:685.4px;" width="19" height="19" viewBox="0 0 24 24"><path d="M12 4.5C7 4.5 2.73 7.61 1 12c1.73 4.39 6 7.5 11 7.5s9.27-3.11 11-7.5c-1.73-4.39-6-7.5-11-7.5zM12 17c-2.76 0-5-2.24-5-5s2.24-5 5-5 5 2.24 5 5-2.24 5-5 5zm0-8c-1.66 0-3 1.34-3 3s1.34 3 3 3 3-1.34 3-3-1.34-3-3-3z" fill="#fff"/></svg>
<div class="t" style="left:1618.2px;top:687.95px;font-size:14px;line-height:14px;color:#fff;font-weight:normal;">View</div>
<svg class="r" style="left:1661.6px;top:686.7px;" width="18.6" height="18.6" viewBox="0 0 24 24"><path d="M3 17.25V21h3.75L17.81 9.94l-3.75-3.75L3 17.25zM20.71 7.04c.39-.39.39-1.02 0-1.41l-2.34-2.34a.9959.9959 0 0 0-1.41 0l-1.83 1.83 3.75 3.75 1.83-1.83z" fill="#1f4a7c"/></svg>
<svg class="r" style="left:1687px;top:687px;" width="16" height="17" viewBox="0 0 16 17"><g fill="none" stroke="#1f4a7c" stroke-width="1.3"><path d="M1 4 H15"/><path d="M5.6 4 V1.6 H10.6 V4"/><path d="M2.6 4 V14.8 Q2.6 15.8 3.6 15.8 H12.4 Q13.4 15.8 13.4 14.8 V4"/></g><path d="M5.4 7 V12.7 M8 7 V12.7 M10.5 7 V12.7" stroke="#1f4a7c" stroke-width="1"/></svg>
<svg class="r" style="left:1716px;top:689px;" width="6" height="13" viewBox="0 0 6 13"><circle cx="3" cy="2.2" r="1.8" fill="#1f4a7c"/><circle cx="3" cy="6.9" r="1.8" fill="#1f4a7c"/><circle cx="3" cy="11.5" r="1.8" fill="#1f4a7c"/></svg>
<div class="t" style="left:401.8px;top:727.95px;font-size:14px;line-height:14px;color:#dedede;font-weight:normal;">Suspicious OCI Instance Activity</div>
<div class="t" style="left:702.8px;top:727.95px;font-size:14px;line-height:14px;color:#dedede;font-weight:normal;">5</div>
<div class="t" style="left:822.6px;top:727.95px;font-size:14px;line-height:14px;color:#dedede;font-weight:normal;">5</div>
<div class="t" style="left:975.8px;top:727.95px;font-size:14px;line-height:14px;color:#dedede;font-weight:normal;">12</div>
<div class="t" style="left:1096.6px;top:727.95px;font-size:14px;line-height:14px;color:#dedede;font-weight:normal;width:104.3px;overflow:hidden;white-space:nowrap">Exfiltration &amp; Impact</div>
<div class="t" style="left:1216.6px;top:727.95px;font-size:14px;line-height:14px;color:#dedede;font-weight:normal;width:104.3px;overflow:hidden;white-space:nowrap">Impact</div>
<div class="t" style="left:1337px;top:727.95px;font-size:14px;line-height:14px;color:#dedede;font-weight:normal;width:104.3px;overflow:hidden;white-space:nowrap">OCI</div>
<div class="t" style="left:1456.3px;top:727.95px;font-size:14px;line-height:14px;color:#dedede;font-weight:normal;">All Tenants</div>
<div class="r" style="left:1586px;top:723px;width:70px;height:24px;background:#1e8bff;border-radius:4px"></div>
<svg class="r" style="left:1594.5px;top:725.4px;" width="19" height="19" viewBox="0 0 24 24"><path d="M12 4.5C7 4.5 2.73 7.61 1 12c1.73 4.39 6 7.5 11 7.5s9.27-3.11 11-7.5c-1.73-4.39-6-7.5-11-7.5zM12 17c-2.76 0-5-2.24-5-5s2.24-5 5-5 5 2.24 5 5-2.24 5-5 5zm0-8c-1.66 0-3 1.34-3 3s1.34 3 3 3 3-1.34 3-3-1.34-3-3-3z" fill="#fff"/></svg>
<div class="t" style="left:1618.2px;top:727.95px;font-size:14px;line-height:14px;color:#fff;font-weight:normal;">View</div>
<svg class="r" style="left:1661.6px;top:726.7px;" width="18.6" height="18.6" viewBox="0 0 24 24"><path d="M3 17.25V21h3.75L17.81 9.94l-3.75-3.75L3 17.25zM20.71 7.04c.39-.39.39-1.02 0-1.41l-2.34-2.34a.9959.9959 0 0 0-1.41 0l-1.83 1.83 3.75 3.75 1.83-1.83z" fill="#1f4a7c"/></svg>
<svg class="r" style="left:1687px;top:727px;" width="16" height="17" viewBox="0 0 16 17"><g fill="none" stroke="#1f4a7c" stroke-width="1.3"><path d="M1 4 H15"/><path d="M5.6 4 V1.6 H10.6 V4"/><path d="M2.6 4 V14.8 Q2.6 15.8 3.6 15.8 H12.4 Q13.4 15.8 13.4 14.8 V4"/></g><path d="M5.4 7 V12.7 M8 7 V12.7 M10.5 7 V12.7" stroke="#1f4a7c" stroke-width="1"/></svg>
<svg class="r" style="left:1716px;top:729px;" width="6" height="13" viewBox="0 0 6 13"><circle cx="3" cy="2.2" r="1.8" fill="#1f4a7c"/><circle cx="3" cy="6.9" r="1.8" fill="#1f4a7c"/><circle cx="3" cy="11.5" r="1.8" fill="#1f4a7c"/></svg>
<div class="t" style="left:401.8px;top:767.95px;font-size:14px;line-height:14px;color:#dedede;font-weight:normal;">Suspicious OCI Scanning Activity</div>
<div class="t" style="left:702.8px;top:767.95px;font-size:14px;line-height:14px;color:#dedede;font-weight:normal;">5</div>
<div class="t" style="left:822.6px;top:767.95px;font-size:14px;line-height:14px;color:#dedede;font-weight:normal;">5</div>
<div class="t" style="left:975.8px;top:767.95px;font-size:14px;line-height:14px;color:#dedede;font-weight:normal;">5</div>
<div class="t" style="left:1096.6px;top:767.95px;font-size:14px;line-height:14px;color:#dedede;font-weight:normal;width:104.3px;overflow:hidden;white-space:nowrap">Initial Attempts</div>
<div class="t" style="left:1216.6px;top:767.95px;font-size:14px;line-height:14px;color:#dedede;font-weight:normal;width:104.3px;overflow:hidden;white-space:nowrap">Reconnaissance</div>
<div class="t" style="left:1337px;top:767.95px;font-size:14px;line-height:14px;color:#dedede;font-weight:normal;width:104.3px;overflow:hidden;white-space:nowrap">OCI</div>
<div class="t" style="left:1456.3px;top:767.95px;font-size:14px;line-height:14px;color:#dedede;font-weight:normal;">All Tenants</div>
<div class="r" style="left:1586px;top:763px;width:70px;height:24px;background:#1e8bff;border-radius:4px"></div>
<svg class="r" style="left:1594.5px;top:765.4px;" width="19" height="19" viewBox="0 0 24 24"><path d="M12 4.5C7 4.5 2.73 7.61 1 12c1.73 4.39 6 7.5 11 7.5s9.27-3.11 11-7.5c-1.73-4.39-6-7.5-11-7.5zM12 17c-2.76 0-5-2.24-5-5s2.24-5 5-5 5 2.24 5 5-2.24 5-5 5zm0-8c-1.66 0-3 1.34-3 3s1.34 3 3 3 3-1.34 3-3-1.34-3-3-3z" fill="#fff"/></svg>
<div class="t" style="left:1618.2px;top:767.95px;font-size:14px;line-height:14px;color:#fff;font-weight:normal;">View</div>
<svg class="r" style="left:1661.6px;top:766.7px;" width="18.6" height="18.6" viewBox="0 0 24 24"><path d="M3 17.25V21h3.75L17.81 9.94l-3.75-3.75L3 17.25zM20.71 7.04c.39-.39.39-1.02 0-1.41l-2.34-2.34a.9959.9959 0 0 0-1.41 0l-1.83 1.83 3.75 3.75 1.83-1.83z" fill="#1f4a7c"/></svg>
<svg class="r" style="left:1687px;top:767px;" width="16" height="17" viewBox="0 0 16 17"><g fill="none" stroke="#1f4a7c" stroke-width="1.3"><path d="M1 4 H15"/><path d="M5.6 4 V1.6 H10.6 V4"/><path d="M2.6 4 V14.8 Q2.6 15.8 3.6 15.8 H12.4 Q13.4 15.8 13.4 14.8 V4"/></g><path d="M5.4 7 V12.7 M8 7 V12.7 M10.5 7 V12.7" stroke="#1f4a7c" stroke-width="1"/></svg>
<svg class="r" style="left:1716px;top:769px;" width="6" height="13" viewBox="0 0 6 13"><circle cx="3" cy="2.2" r="1.8" fill="#1f4a7c"/><circle cx="3" cy="6.9" r="1.8" fill="#1f4a7c"/><circle cx="3" cy="11.5" r="1.8" fill="#1f4a7c"/></svg>
<div class="r" style="left:793px;top:396px;width:122px;height:394px;border:3px solid #ffbe00;box-sizing:border-box;box-shadow:0 0 0 1px rgba(0,0,20,0.45)"></div>
</div>
</body></html>
